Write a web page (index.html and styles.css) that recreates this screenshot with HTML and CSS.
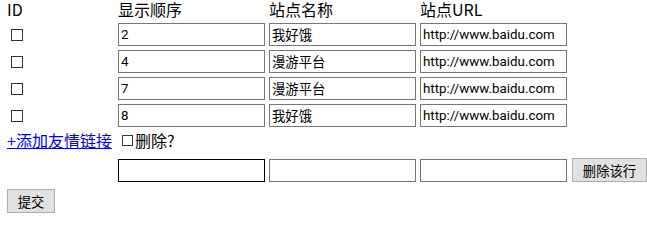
FILE: index.html
```html
<!DOCTYPE html>
<html lang="zh">
<head>
<meta charset="utf-8">
<title>友情链接</title>
<link rel="stylesheet" href="styles.css">
</head>
<body>
<form class="links-form">
  <div class="grid">
    <div class="head">ID</div>
    <div class="head">显示顺序</div>
    <div class="head">站点名称</div>
    <div class="head">站点URL</div>
    <div></div>

    <div class="cell"><input type="checkbox" class="check"></div>
    <input class="field" type="text" value="2">
    <input class="field" type="text" value="我好饿">
    <input class="field" type="text" value="http://www.baidu.com">
    <div></div>

    <div class="cell"><input type="checkbox" class="check"></div>
    <input class="field" type="text" value="4">
    <input class="field" type="text" value="漫游平台">
    <input class="field" type="text" value="http://www.baidu.com">
    <div></div>

    <div class="cell"><input type="checkbox" class="check"></div>
    <input class="field" type="text" value="7">
    <input class="field" type="text" value="漫游平台">
    <input class="field" type="text" value="http://www.baidu.com">
    <div></div>

    <div class="cell"><input type="checkbox" class="check"></div>
    <input class="field" type="text" value="8">
    <input class="field" type="text" value="我好饿">
    <input class="field" type="text" value="http://www.baidu.com">
    <div></div>

    <div class="link-cell"><a href="#" class="add-link">+添加友情链接</a></div>
    <label class="delete-label"><input type="checkbox" class="check small">删除?</label>
    <div></div>
    <div></div>
    <div></div>

    <div></div>
    <input class="field focused" type="text" value="">
    <input class="field" type="text" value="">
    <input class="field" type="text" value="">
    <button type="button" class="btn del-btn">删除该行</button>
  </div>
  <button type="submit" class="btn submit-btn">提交</button>
</form>
</body>
</html>
```

FILE: styles.css
```css
html, body {
  margin: 0;
  padding: 0;
  background: #fff;
}

body {
  font-family: "Noto Sans CJK SC", "Noto Sans", sans-serif;
  font-size: 16px;
  color: #000;
}

.links-form {
  padding: 0 0 0 7px;
}

.grid {
  display: grid;
  grid-template-columns: 107px 147px 147px 147px 76px;
  grid-template-rows: 19px 23px 23px 23px 23px 23px 24px;
  column-gap: 4px;
  row-gap: 4px;
  align-items: center;
}

.head {
  line-height: 19px;
  white-space: nowrap;
  align-self: start;
}

.cell {
  display: flex;
  align-items: center;
}

.check {
  -webkit-appearance: none;
  appearance: none;
  width: 12px;
  height: 12px;
  margin: 0 0 0 4px;
  border: 1px solid #333;
  background: #fff;
  border-radius: 0;
  box-sizing: border-box;
}

.check.small {
  width: 11px;
  height: 11px;
  margin: 0 2px 0 4px;
}

.field {
  box-sizing: border-box;
  width: 147px;
  height: 23px;
  margin: 0;
  padding: 0 2px;
  border: 1px solid #767676;
  font-family: Roboto, "Noto Sans CJK SC", sans-serif;
  font-size: 13.33px;
  color: #000;
  background: #fff;
  outline: none;
}

.field.focused {
  border-color: #000;
}

.link-cell {
  line-height: 19px;
  white-space: nowrap;
  align-self: start;
}

.add-link {
  color: #0000ee;
  text-decoration: underline;
}

.delete-label {
  display: flex;
  align-items: center;
  white-space: nowrap;
  line-height: 19px;
  align-self: start;
}

.btn {
  box-sizing: border-box;
  height: 24px;
  margin: 0;
  padding: 0;
  border: 1px solid #adadad;
  background: #e1e1e1;
  font-family: "Noto Sans CJK SC", "Noto Sans", sans-serif;
  font-size: 13.33px;
  color: #000;
  border-radius: 0;
}

.del-btn {
  width: 75px;
  margin-left: 1px;
}

.submit-btn {
  width: 48px;
  margin-top: 7px;
}
```
